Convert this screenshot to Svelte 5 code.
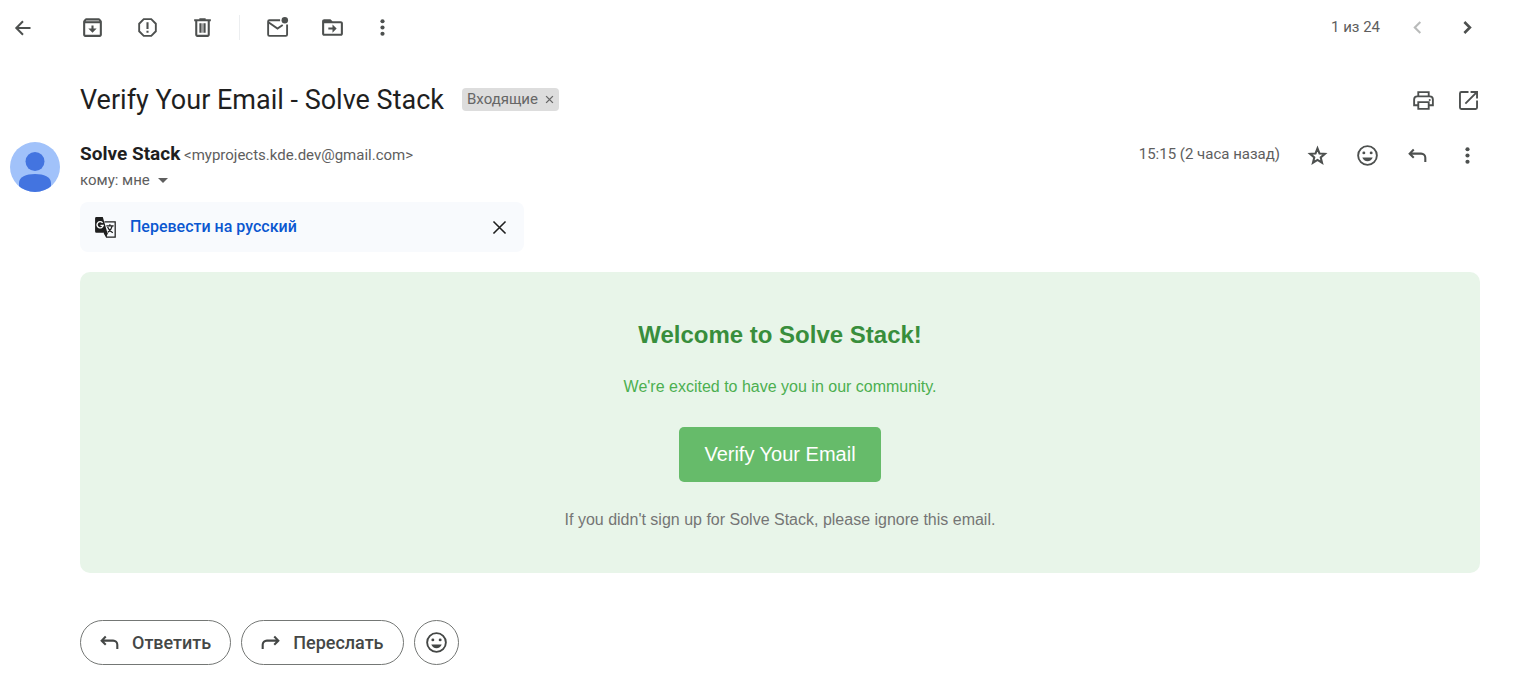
<script>
  const mailTools = [
    { name: 'archive', label: 'Архивировать' },
    { name: 'spam', label: 'В спам' },
    { name: 'trash', label: 'Удалить' },
  ];
  const moreTools = [
    { name: 'unread', label: 'Отметить как непрочитанное' },
    { name: 'move', label: 'Переместить' },
  ];
</script>

{#snippet icon(name)}
  <svg class="icon" viewBox="0 0 24 24" aria-hidden="true">
    {#if name === 'back'}
      <path class="line" d="M19.5 12H5.8M12 5.3 5.3 12l6.7 6.7" />
    {:else if name === 'archive'}
      <path d="m20.54 5.23-1.39-1.68C18.88 3.21 18.47 3 18 3H6c-.47 0-.88.21-1.16.55L3.46 5.23C3.17 5.57 3 6.02 3 6.5V19c0 1.1.9 2 2 2h14c1.1 0 2-.9 2-2V6.5c0-.48-.17-.93-.46-1.27zM6.240 5h11.520l.830 1H5.420zM19 19H5V8h14v11zM11 10h2v3h3l-4 4-4-4h3z" />
      <path class="shade" d="M5.2 6.2 6.240 5h11.520l1 1.2z" />
    {:else if name === 'spam'}
      <path class="line fit" d="M8.4 4h7.2L20 8.4v7.2L15.6 20H8.4L4 15.6V8.4z" />
      <path d="M11 7h2v6.5h-2zM11 15h2v2h-2z" />
    {:else if name === 'trash'}
      <path d="M15 4V3H9v1H4v2h1v13c0 1.1.9 2 2 2h10c1.1 0 2-.9 2-2V6h1V4h-5zm2 15H7V6h10v13zM9 8h2v9H9zM13 8h2v9h-2z" />
      <path class="shade" d="M11 8h2v9h-2z" />
    {:else if name === 'unread'}
      <path class="line fit" d="M14.5 5H4.2A1.2 1.2 0 0 0 3 6.2v12.6A1.2 1.2 0 0 0 4.2 20H20a1.2 1.2 0 0 0 1.2-1.2V9M3.3 7 12 13l5-3.4" />
      <circle cx="19" cy="5" r="3.1" />
    {:else if name === 'move'}
      <path d="M20 6h-8l-2-2H4c-1.1 0-2 .9-2 2v12c0 1.1.9 2 2 2h16c1.1 0 2-.9 2-2V8c0-1.100-.9-2-2-2zm0 12H4V8h16v10zM12 12V9l4 4-4 4v-3H8v-2z" />
    {:else if name === 'more'}
      <circle cx="12" cy="6" r="2" /><circle cx="12" cy="12" r="2" /><circle cx="12" cy="18" r="2" />
    {:else if name === 'prev'}
      <path d="M15.41 7.41 14 6l-6 6 6 6 1.41-1.41L10.83 12z" />
    {:else if name === 'next'}
      <path class="line thick" d="m9 6.7 5.3 5.3L9 17.3" />
    {:else if name === 'print'}
      <path class="line fit" d="M7 8V4h10v4M7 16.5H3V11a3 3 0 0 1 3-3h12a3 3 0 0 1 3 3v5.5h-4M7 13.500h10V20H7z" />
      <circle cx="18" cy="11.5" r="1" />
    {:else if name === 'open'}
      <path class="line fit" d="M12 3.8H5.2A1.4 1.4 0 0 0 3.8 5.2v13.6a1.4 1.4 0 0 0 1.4 1.4h13.6a1.4 1.4 0 0 0 1.4-1.4V12M14 3.8h6.2V10M20 4 9 15" />
    {:else if name === 'star'}
      <path class="line" d="m12 5.2 1.9 4.800 5.200.4-4 3.400 1.250 5.100L12 16.200l-4.350 2.700L8.900 13.800l-4-3.400 5.200-.4z" />
    {:else if name === 'smile'}
      <circle class="line fit" cx="12" cy="12" r="9" />
      <circle cx="8.5" cy="9.5" r="1.4" /><circle cx="15.5" cy="9.5" r="1.4" />
      <path d="M7 14h10c-.8 2.100-2.700 3.500-5 3.500S7.800 16.100 7 14z" />
    {:else if name === 'reply'}
      <path class="line" d="M8.4 6.300 4.500 10.200l3.900 3.900M4.700 10.200H15.500a4 4 0 0 1 4 4v4" />
    {:else if name === 'forward'}
      <path class="line" d="m15.600 6.300 3.900 3.900-3.900 3.900M19.300 10.200H8.500a4 4 0 0 0-4 4v4" />
    {:else if name === 'close'}
      <path class="line thin" d="m6.200 6.200 11.600 11.600M17.800 6.200 6.200 17.800" />
    {:else if name === 'translate'}
      <path class="line fine" d="M11 6.500h10.300v14.700H13l-2.200-4" />
      <path d="M3.200 2h6.200l4.400 15H3.200A1.200 1.200 0 0 1 2 15.800V3.200A1.200 1.200 0 0 1 3.200 2zM10.500 17h4L12.800 21z" />
      <path class="cut" d="M9.200 7.500A3 3 0 1 0 9.800 10H7.200" />
      <path class="line fine" d="M12.800 10.500h7M16.200 8.800v1.700M18.500 10.500c-.6 2.800-2 4.500-4.200 6M14 11.500c.8 2.300 2.500 4 5 5.500" />
    {/if}
  </svg>
{/snippet}

{#snippet tool(name, label)}
  <button class="tool {name}" type="button" aria-label={label}>{@render icon(name)}</button>
{/snippet}

<main>
  <header class="toolbar">
    <div class="back-slot">{@render tool('back', 'Назад')}</div>
    {#each mailTools as t}{@render tool(t.name, t.label)}{/each}
    <span class="divider"></span>
    {#each moreTools as t}{@render tool(t.name, t.label)}{/each}
    {@render tool('more', 'Ещё')}
    <div class="pager">
      <span>1 из 24</span>
      {@render tool('prev', 'Предыдущее')}
      {@render tool('next', 'Следующее')}
    </div>
  </header>

  <div class="subject">
    <h1>Verify Your Email - Solve Stack</h1>
    <span class="label"><span>Входящие</span>
      <button type="button" aria-label="Удалить ярлык">
        <svg viewBox="0 0 8 8" aria-hidden="true"><path d="m1 1 6 6M7 1 1 7" /></svg>
      </button>
    </span>
    <div class="subject-actions">
      {@render tool('print', 'Печать')}
      {@render tool('open', 'В новом окне')}
    </div>
  </div>

  <section class="message">
    <svg class="avatar" viewBox="0 0 50 50" aria-hidden="true">
      <defs><clipPath id="round"><circle cx="25" cy="25" r="25" /></clipPath></defs>
      <g clip-path="url(#round)">
        <rect width="50" height="50" fill="#a1c2fa" />
        <circle cx="25" cy="19.5" r="9.5" fill="#4374e0" />
        <path fill="#4374e0" d="M9 50v-9c0-6 7-9 16-9s16 3 16 9v9z" />
      </g>
    </svg>
    <div class="content">
      <div class="meta">
        <div class="sender">
          <div class="from"><strong>Solve Stack</strong> <span>&lt;myprojects.kde.dev@gmail.com&gt;</span></div>
          <button class="to" type="button">кому: мне
            <svg viewBox="0 0 10 5" aria-hidden="true"><path d="M0 0h10L5 5z" /></svg>
          </button>
        </div>
        <div class="meta-actions">
          <time>15:15 (2 часа назад)</time>
          {@render tool('star', 'Пометить')}
          {@render tool('smile', 'Добавить реакцию')}
          {@render tool('reply', 'Ответить')}
          {@render tool('more', 'Ещё')}
        </div>
      </div>

      <div class="translate-bar">
        {@render icon('translate')}
        <button class="translate-link" type="button">Перевести на русский</button>
        {@render tool('close', 'Закрыть')}
      </div>

      <article>
        <h2>Welcome to Solve Stack!</h2>
        <p class="intro">We're excited to have you in our community.</p>
        <a href="#verify">Verify Your Email</a>
        <p class="note">If you didn't sign up for Solve Stack, please ignore this email.</p>
      </article>

      <footer>
        <button class="pill" type="button">{@render icon('reply')}Ответить</button>
        <button class="pill" type="button">{@render icon('forward')}Переслать</button>
        <button class="pill round" type="button" aria-label="Добавить реакцию">{@render icon('smile')}</button>
      </footer>
    </div>
  </section>
</main>

<style>
  :global(body) { margin: 0; background: #fff; }
  main { font: 15px/20px Roboto, sans-serif; color: #5e5e5e; }
  button { font: inherit; color: inherit; background: none; border: 0; padding: 0; cursor: pointer; }
  h1, h2, p { margin: 0; }
  .icon { display: block; width: 25px; height: 25px; flex: none; fill: currentColor; }
  .line { fill: none; stroke: currentColor; stroke-width: 2; }
  .fit { stroke-width: 1.8; }
  .thin { stroke-width: 1.5; }
  .fine { stroke-width: 1.2; }
  .thick { stroke-width: 2.5; }
  .shade { opacity: 0.5; }
  .cut { fill: none; stroke: #fff; stroke-width: 1.3; }
  .tool { display: grid; place-items: center; flex: none; height: 50px; width: 50px; color: #4d504f; }

  .toolbar { display: flex; align-items: center; height: 55px; padding-right: 23px; }
  .toolbar > .tool { width: 55px; }
  .back-slot { width: 65px; flex: none; }
  .back-slot :global(.tool) { width: 45px; }
  .toolbar .back .icon { width: 24px; height: 24px; }
  .divider { width: 1px; height: 25px; margin: 0 10px 0 9px; background: #eceef0; }
  .toolbar > .more { width: 45px; }
  .pager { display: flex; align-items: center; margin-left: auto; }
  .pager span { margin-right: 12px; padding-bottom: 2px; }
  .toolbar .prev { color: #b9bbba; }

  .subject { display: flex; align-items: center; height: 50px; margin-top: 20px; padding: 0 24px 0 80px; }
  h1 { font-size: 27px; line-height: 35px; font-weight: 400; color: #1f1f1f; }
  .label { display: flex; align-items: center; gap: 7px; height: 23px; margin: 0 0 2px 18px; padding: 0 5px; border-radius: 4px; background: #ddd; color: #666; }
  .label button { display: grid; width: 9px; height: 9px; }
  .label svg { width: 9px; height: 9px; fill: none; stroke: #666; stroke-width: 1.2; }
  .subject-actions { display: flex; margin-left: auto; }
  .subject-actions :global(.tool) { width: 45px; }

  .message { display: flex; gap: 20px; padding: 17px 35px 16px 10px; }
  .avatar { width: 50px; height: 50px; flex: none; }
  .content { flex: 1; min-width: 0; }
  .meta { display: flex; justify-content: space-between; height: 60px; }
  .from { line-height: 24px; }
  .from strong { font-size: 19px; font-weight: 700; color: #1f1f1f; }
  .to { display: flex; align-items: center; gap: 8px; height: 26px; }
  .to svg { width: 10px; height: 5px; fill: #5e5e5e; }
  .meta-actions { display: flex; align-items: center; height: 26px; margin-right: -12px; }
  time { margin-right: 12px; padding-bottom: 2px; }

  .translate-bar { display: flex; align-items: center; box-sizing: border-box; max-width: 444px; height: 50px; padding-left: 13px; border-radius: 8px; background: #f8fafd; color: #1f1f1f; }
  .translate-link { flex: 1; margin-left: 12px; text-align: left; font-size: 16px; font-weight: 500; color: #0b57d0; }
  .translate-bar .icon { color: #1f1f1f; }

  article { display: flex; flex-direction: column; align-items: center; margin-top: 20px; padding: 46px 25px 42px; border-radius: 10px; background: #e8f5e9; font: 16px/22px "Liberation Sans", Arial, sans-serif; }
  h2 { font-size: 24px; line-height: 34px; color: #388e3c; }
  .intro { margin-top: 24px; color: #4caf50; }
  article a { margin: 29px 0 27px; padding: 15px 25px; border-radius: 5px; background: #66bb6a; color: #fff; font-size: 20px; line-height: 25px; text-decoration: none; }
  .note { color: #757575; }

  footer { display: flex; gap: 10px; margin-top: 47px; }
  .pill { display: flex; align-items: center; justify-content: center; gap: 10px; box-sizing: border-box; height: 45px; padding: 0 19px 0 16px; border: 1px solid #747775; border-radius: 23px; font-size: 18px; font-weight: 500; color: #444746; }
  .round { width: 45px; padding: 0; }
</style>
